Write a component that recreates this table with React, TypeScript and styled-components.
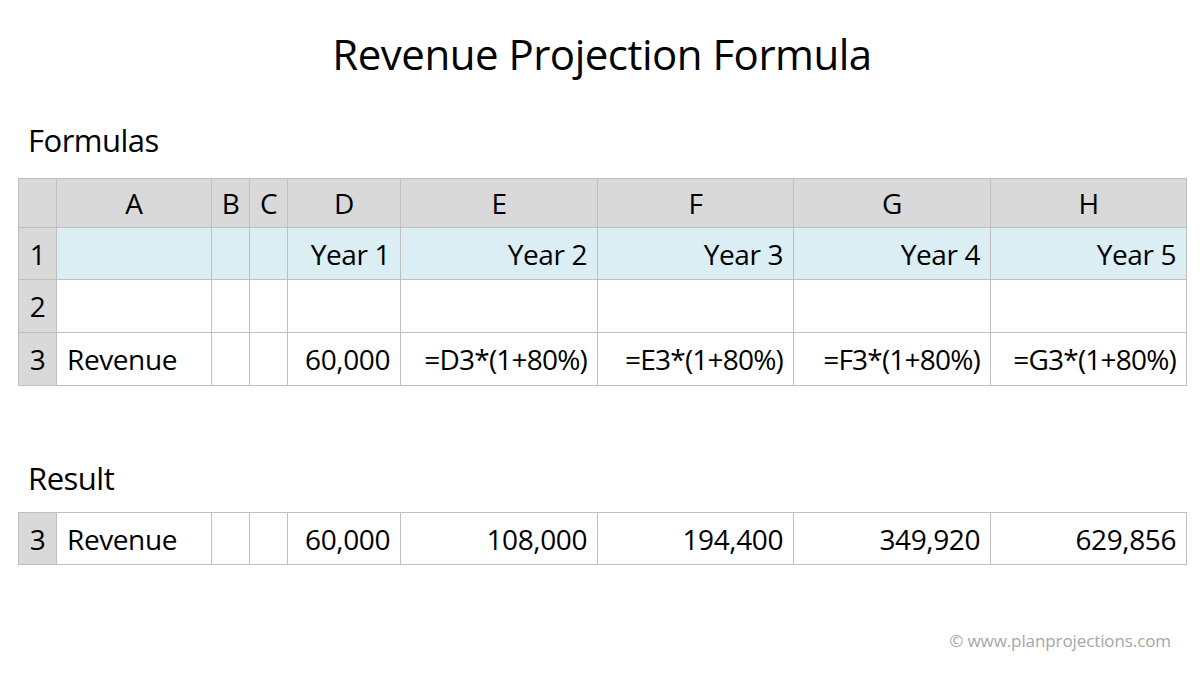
import styled, { createGlobalStyle } from 'styled-components';

const GlobalStyle = createGlobalStyle`
  html, body {
    margin: 0;
    padding: 0;
    background: #ffffff;
  }
  body {
    font-family: 'Open Sans', 'Liberation Sans', sans-serif;
    color: #000000;
  }
`;

const Page = styled.main`
  width: 1200px;
  height: 675px;
  box-sizing: border-box;
  padding: 26px 14px 0 18px;
  display: flex;
  flex-direction: column;
  overflow: hidden;
`;

const Title = styled.h1`
  margin: 0;
  font-weight: 400;
  font-size: 42px;
  line-height: 56px;
  text-align: center;
  letter-spacing: -0.5px;
`;

const SectionLabel = styled.h2<{ $top: number }>`
  margin: ${(p) => p.$top}px 0 0 10px;
  font-weight: 400;
  font-size: 31px;
  line-height: 40px;
  letter-spacing: -0.5px;
`;

const Sheet = styled.table<{ $top: number }>`
  margin-top: ${(p) => p.$top}px;
  border-collapse: collapse;
  table-layout: fixed;
  width: 1168px;
  font-size: 28px;
  letter-spacing: -0.4px;
`;

const Cell = styled.td<{ $bg?: string; $align?: 'left' | 'center' | 'right'; $h?: number }>`
  border: 1px solid #bfbfbf;
  background: ${(p) => p.$bg ?? '#ffffff'};
  text-align: ${(p) => p.$align ?? 'left'};
  height: ${(p) => p.$h ?? 52}px;
  padding: 0 10px;
  box-sizing: border-box;
  white-space: nowrap;
  overflow: hidden;
`;

const ColHead = styled(Cell)`
  background: #d9d9d9;
  text-align: center;
  padding: 0;
`;

const RowHead = styled(Cell)`
  background: #d9d9d9;
  text-align: center;
  padding: 0;
`;

const FormulaCell = styled(Cell)`
  text-align: right;
  padding: 0 10px 0 0;
  letter-spacing: -0.8px;
`;

const Footer = styled.div`
  margin-top: auto;
  margin-bottom: 23px;
  margin-right: 15px;
  text-align: right;
  font-size: 17px;
  color: #a6a6a6;
  letter-spacing: -0.1px;
`;

const widths = [38, 155, 38, 38, 113, 197, 196, 197, 196];
const letters = ['A', 'B', 'C', 'D', 'E', 'F', 'G', 'H'];
const BLUE = '#daeef3';

const Cols = () => (
  <colgroup>
    {widths.map((w, i) => (
      <col key={i} style={{ width: w }} />
    ))}
  </colgroup>
);

const formulas = ['=D3*(1+80%)', '=E3*(1+80%)', '=F3*(1+80%)', '=G3*(1+80%)'];
const results = ['108,000', '194,400', '349,920', '629,856'];

const App = () => {
  return (
    <>
      <GlobalStyle />
      <Page>
        <Title>Revenue Projection Formula</Title>
        <SectionLabel $top={38}>Formulas</SectionLabel>
        <Sheet $top={18}>
          <Cols />
          <tbody>
            <tr>
              <ColHead $h={49} />
              {letters.map((l) => (
                <ColHead key={l} $h={49}>
                  {l}
                </ColHead>
              ))}
            </tr>
            <tr>
              <RowHead>1</RowHead>
              <Cell $bg={BLUE} />
              <Cell $bg={BLUE} />
              <Cell $bg={BLUE} />
              {[1, 2, 3, 4, 5].map((y) => (
                <Cell key={y} $bg={BLUE} $align="right">
                  Year {y}
                </Cell>
              ))}
            </tr>
            <tr>
              <RowHead $h={53}>2</RowHead>
              {widths.slice(1).map((_, i) => (
                <Cell key={i} $h={53} />
              ))}
            </tr>
            <tr>
              <RowHead $h={53}>3</RowHead>
              <Cell $h={53}>Revenue</Cell>
              <Cell $h={53} />
              <Cell $h={53} />
              <Cell $h={53} $align="right">60,000</Cell>
              {formulas.map((f) => (
                <FormulaCell key={f} $h={53}>
                  {f}
                </FormulaCell>
              ))}
            </tr>
          </tbody>
        </Sheet>
        <SectionLabel $top={72}>Result</SectionLabel>
        <Sheet $top={14}>
          <Cols />
          <tbody>
            <tr>
              <RowHead>3</RowHead>
              <Cell>Revenue</Cell>
              <Cell />
              <Cell />
              <Cell $align="right">60,000</Cell>
              {results.map((r) => (
                <Cell key={r} $align="right">
                  {r}
                </Cell>
              ))}
            </tr>
          </tbody>
        </Sheet>
        <Footer>© www.planprojections.com</Footer>
      </Page>
    </>
  );
};

export default App;
